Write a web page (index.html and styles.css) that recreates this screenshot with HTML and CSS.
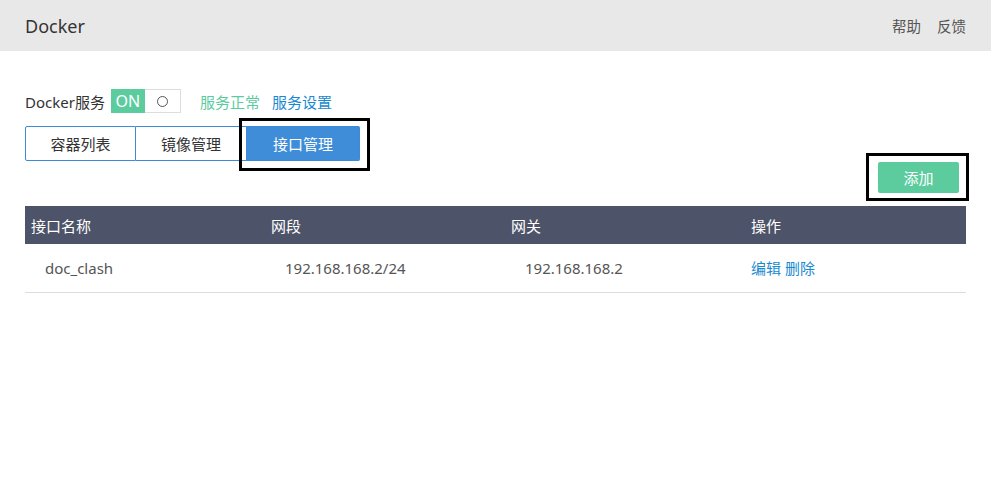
FILE: index.html
```html
<!DOCTYPE html>
<html>
<head>
<meta charset="utf-8">
<link rel="stylesheet" href="styles.css">
</head>
<body>
<header class="topbar">
  <div class="brand">Docker</div>
  <nav class="toplinks"><a>帮助</a><a>反馈</a></nav>
</header>
<main class="content">
  <div class="service-row">
    <span class="label">Docker服务</span>
    <span class="switch"><span class="on">ON</span><span class="off"><i class="knob"></i></span></span>
    <span class="status">服务正常</span>
    <a class="setting">服务设置</a>
  </div>
  <div class="tabs">
    <div class="tab">容器列表</div>
    <div class="tab">镜像管理</div>
    <div class="tab active">接口管理<span class="mark mark-tab"></span></div>
  </div>
  <div class="actions">
    <button class="add">添加<span class="mark mark-add"></span></button>
  </div>
  <table class="grid">
    <colgroup><col class="c1"><col class="c2"><col class="c3"><col class="c4"></colgroup>
    <thead>
      <tr><th>接口名称</th><th>网段</th><th>网关</th><th>操作</th></tr>
    </thead>
    <tbody>
      <tr><td class="pad">doc_clash</td><td class="pad">192.168.168.2/24</td><td class="pad">192.168.168.2</td><td class="ops"><a>编辑</a> <a>删除</a></td></tr>
    </tbody>
  </table>
</main>
</body>
</html>
```
FILE: styles.css
```css
* { box-sizing: border-box; }
body {
  margin: 0;
  font-family: "Noto Sans", "Noto Sans CJK SC", sans-serif;
  font-size: 15px;
  color: #333;
  background: #fff;
}
.topbar {
  height: 51px;
  background: #e8e8e8;
  display: flex;
  align-items: center;
  justify-content: space-between;
  padding: 0 25px 0 25px;
}
.brand { font-size: 18px; color: #333; }
.toplinks { display: flex; gap: 16px; }
.toplinks a { color: #555; font-size: 14.5px; }
.content { padding: 38px 25px 0 25px; }
.service-row {
  display: flex;
  align-items: center;
  height: 24px;
}
.label { margin-right: 6px; }
.switch {
  display: flex;
  height: 24px;
  border: 1px solid #ddd;
  width: 70px;
}
.switch .on {
  width: 34px;
  background: #5ccc9f;
  color: #fff;
  display: flex;
  align-items: center;
  justify-content: center;
  margin: -1px 0 -1px -1px;
  font-size: 16px;
}
.switch .off {
  flex: 1;
  display: flex;
  align-items: center;
  justify-content: center;
}
.knob {
  width: 11px; height: 11px;
  border: 1px solid #555;
  border-radius: 50%;
}
.status { color: #5ccc9f; margin-left: 19px; }
.setting { color: #1a8ad0; margin-left: 12px; }
.tabs {
  display: flex;
  margin-top: 13px;
  height: 35px;
}
.tab {
  width: 111px;
  border: 1px solid #3d8bd8;
  display: flex;
  align-items: center;
  justify-content: center;
  position: relative;
  color: #333;
}
.tab + .tab { border-left: none; }
.tab:first-child { border-radius: 2px 0 0 2px; }
.tab.active {
  background: #3f8dd8;
  color: #fff;
  border-radius: 0 2px 2px 0;
  width: 113px;
}
.mark {
  position: absolute;
  border: 3px solid #000;
  pointer-events: none;
}
.mark-tab { left: -8px; right: -11px; top: -9px; bottom: -11px; }
.actions {
  display: flex;
  justify-content: flex-end;
  padding-right: 7px;
  margin-top: 1px;
}
.add {
  position: relative;
  width: 81px;
  height: 31px;
  border: none;
  border-radius: 2px;
  background: #5ccc9f;
  color: #fff;
  font-family: inherit;
  font-size: 15px;
}
.mark-add { left: -12px; right: -10px; top: -9px; bottom: -8px; }
.grid {
  width: 941px;
  border-collapse: collapse;
  table-layout: fixed;
  margin-top: 13px;
}
.c1, .c2, .c3 { width: 240px; }
.grid th {
  background: #4d5368;
  color: #fff;
  font-weight: normal;
  text-align: left;
  height: 38px;
  padding: 0 6px;
}
.grid td {
  height: 48px;
  border-bottom: 1px solid #ddd;
  color: #555;
  padding: 0;
}
.grid td.pad { padding-left: 20px; }
.grid td.ops { padding-left: 6px; }
.grid td.ops a { color: #1a8ad0; }
```
